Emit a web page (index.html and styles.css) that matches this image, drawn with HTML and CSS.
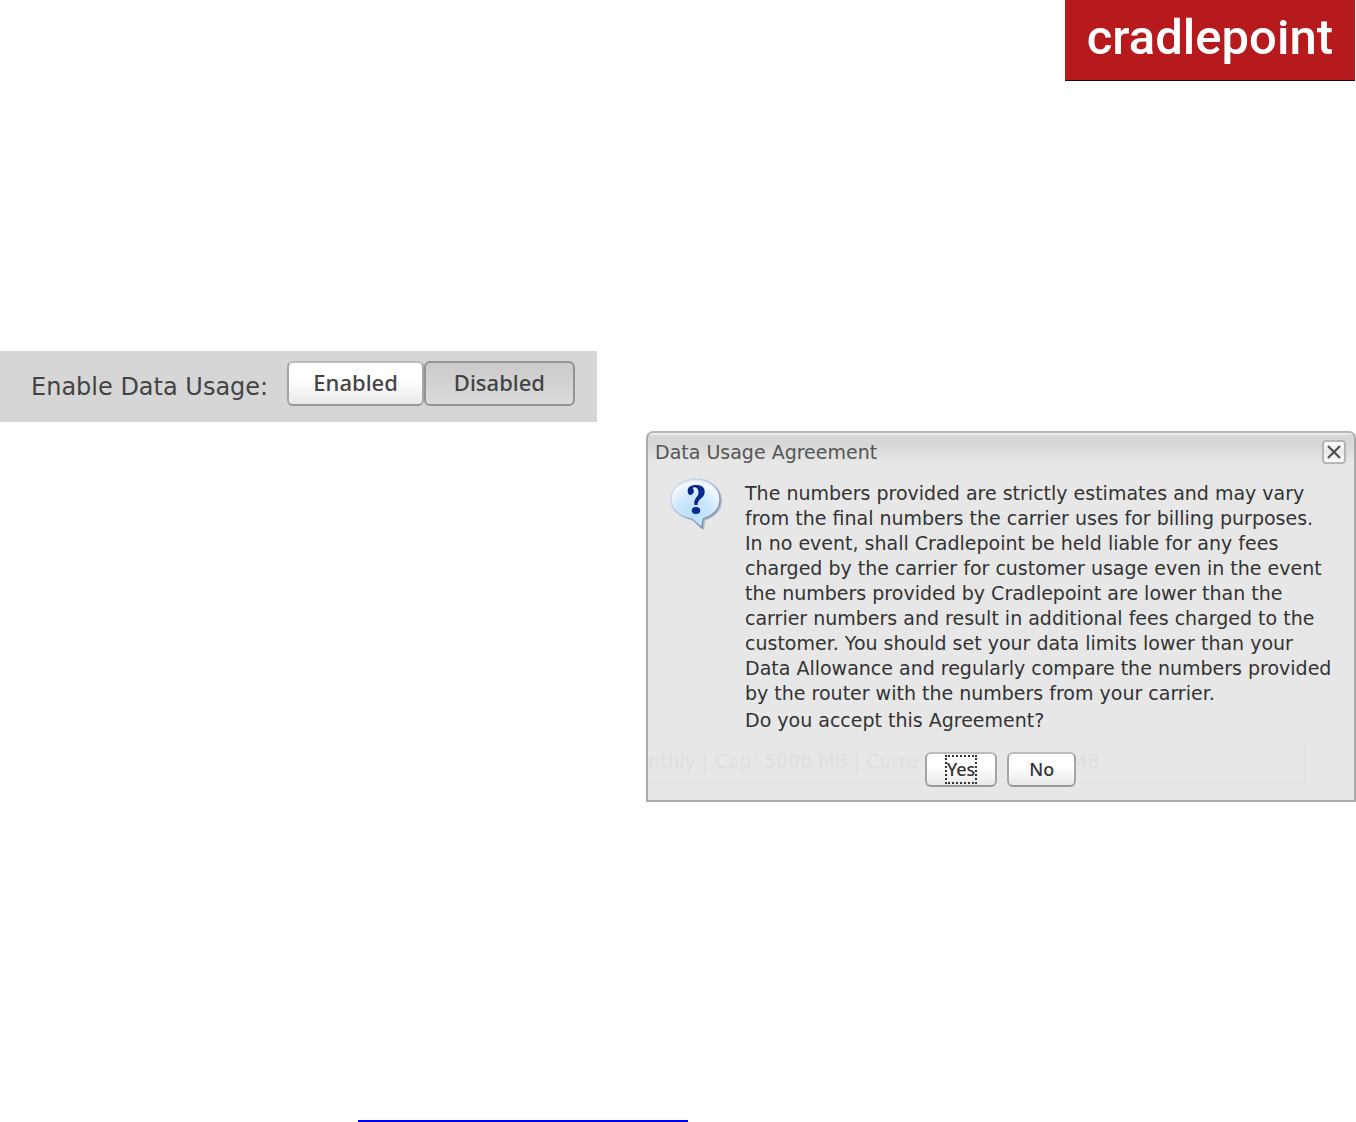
FILE: index.html
```html
<!DOCTYPE html>
<html lang="en">
<head>
<meta charset="utf-8">
<meta name="viewport" content="width=device-width, initial-scale=1">
<title>Data Usage Agreement</title>
<link rel="stylesheet" href="styles.css">
</head>
<body>
<header class="page-header">
  <div class="logo">cradlepoint</div>
</header>
<main class="content">
  <section class="usage" aria-labelledby="usage-label">
    <span class="usage-label" id="usage-label">Enable Data Usage:</span>
    <div class="toggle" role="group" aria-labelledby="usage-label">
      <button class="button toggle-button" type="button" aria-pressed="false">Enabled</button>
      <button class="button toggle-button toggle-disabled" type="button" aria-pressed="true">Disabled</button>
    </div>
  </section>
  <section class="dialog" role="dialog" aria-labelledby="dialog-title">
    <div class="backdrop-text" aria-hidden="true"><span>nthly | Cap: 5000 MB | Curre</span><span>MB</span></div>
    <div class="dialog-header">
      <h1 class="dialog-title" id="dialog-title">Data Usage Agreement</h1>
      <button class="close" type="button" aria-label="Close">
        <svg width="14" height="14" viewBox="0 0 14 14"><path d="M1 1L13 13M13 1L1 13" stroke="#505050" stroke-width="2.2"/></svg>
      </button>
    </div>
    <div class="dialog-body">
      <svg class="question" width="54" height="54" viewBox="0 0 54 54" aria-hidden="true">
        <defs>
          <radialGradient id="bubble" cx="48%" cy="72%" r="75%">
            <stop offset="0" stop-color="#b8e0ff"/>
            <stop offset=".5" stop-color="#cfe7fc"/>
            <stop offset=".85" stop-color="#f5faff"/>
            <stop offset="1" stop-color="#cddbed"/>
          </radialGradient>
          <linearGradient id="rim" x2="1" y2="1">
            <stop offset="0" stop-color="#dce7f4"/>
            <stop offset=".5" stop-color="#a9bdd9"/>
            <stop offset="1" stop-color="#5b7193"/>
          </linearGradient>
        </defs>
        <path d="M28 3C42 3 52 11 52 23C52 33 44 39 35 43L34 52L25 43C12 41 3 34 3 23C3 11 13 3 28 3Z" fill="#909cad" opacity=".6"/>
        <path d="M26 1C40 1 50 10 50 21C50 32 43 38 33 41L32 50L22 41C10 39 1 32 1 21C1 10 12 1 26 1Z" fill="url(#bubble)" stroke="url(#rim)" stroke-width="1.500"/>
        <path d="M18 15C16 8 23 6.500 27 7C34 7.500 36 12 34 17C32 21 28 21 27.500 27H24.500C23 20 29 19 28.500 14C28 9 24 8.500 22.500 10C25.500 13 23 17 20.500 17C19 17 18.300 16 18 15Z" fill="#08298b"/>
        <ellipse cx="26" cy="32.500" rx="4.200" ry="3.500" fill="#08298b"/>
      </svg>
      <div class="message">
        <p>The numbers provided are strictly estimates and may vary<br>from the final numbers the carrier uses for billing purposes.<br>In no event, shall Cradlepoint be held liable for any fees<br>charged by the carrier for customer usage even in the event<br>the numbers provided by Cradlepoint are lower than the<br>carrier numbers and result in additional fees charged to the<br>customer. You should set your data limits lower than your<br>Data Allowance and regularly compare the numbers provided<br>by the router with the numbers from your carrier.</p>
        <p>Do you accept this Agreement?</p>
      </div>
    </div>
    <div class="dialog-actions">
      <button class="button" type="button"><span class="focus-ring">Yes</span></button>
      <button class="button" type="button">No</button>
    </div>
  </section>
</main>
<footer class="page-footer"><a class="footer-link" href="#usage-label" aria-label="Data usage"></a></footer>
</body>
</html>
```
FILE: styles.css
```css
* {
  box-sizing: border-box;
}

body {
  margin: 0;
  background: #fff;
  color: #333;
  font: 19px/25px "DejaVu Sans", sans-serif;
}

.page-header {
  display: flex;
  justify-content: flex-end;
  padding-right: 1px;
}

.logo {
  padding: 10px 22px 14px;
  border-bottom: 1px solid #200;
  background: #b71a1c;
  color: #fff;
  font: 500 49px/56px Roboto, sans-serif;
}

.content {
  display: grid;
  grid-template-columns: 597fr 710fr;
  gap: 9px 49px;
  align-items: start;
  margin-top: 270px;
}

.usage {
  display: flex;
  align-items: center;
  gap: 16px;
  padding: 10px 22px 16px 31px;
  background: #d6d6d6;
}

.usage-label {
  flex: 1;
  padding-top: 8px;
  color: #444;
  font-size: 24px;
  white-space: nowrap;
}

.toggle {
  display: flex;
}

.button {
  height: 35px;
  padding: 0 20px;
  border: 2px solid #a5a5a5;
  border-top-color: #bbb;
  border-bottom-color: #989898;
  border-radius: 6px;
  background: linear-gradient(#fff 40%, #e9e9e9);
  color: #333;
  font: 500 18px/25px "Noto Sans", sans-serif;
}

.toggle-button {
  height: 45px;
  padding: 0 24px 2px;
  color: #444;
  font-size: 22px;
}

.toggle-disabled {
  padding: 0 28px 2px;
  border-color: #8f9496;
  background: linear-gradient(#cbcbcb, #dadada);
}

.dialog {
  position: relative;
  grid-column: 2;
  grid-row: 2;
  padding: 7px 8px 13px 7px;
  border: 2px solid #aaa;
  border-top-color: #b4b7b7;
  border-radius: 7px 7px 0 0;
  background: linear-gradient(#f4f4f4 0, #d7d7d7 3px, #d7d7d7 12px, #e7e7e7 30px);
}

.dialog-header {
  display: flex;
  justify-content: space-between;
  align-items: flex-start;
}

.dialog-title {
  margin: 0;
  color: #555;
  font: inherit;
}

.close {
  display: grid;
  place-items: center;
  width: 24px;
  height: 24px;
  padding: 0;
  border: 2px solid #b5b5b5;
  border-radius: 4px;
  background: linear-gradient(#fff, #e8e8e8 50%, #fff);
}

.dialog-body {
  display: flex;
  gap: 21px;
  padding: 13px 0 0 15px;
}

.question {
  flex: none;
}

.message {
  padding-top: 3px;
  white-space: nowrap;
}

.message p {
  margin: 0;
}

.message p + p {
  margin-top: 2px;
}

.dialog-actions {
  position: relative;
  display: flex;
  justify-content: center;
  gap: 10px;
  margin-top: 19px;
}

.focus-ring {
  display: inline-block;
  outline: 2px dotted #333;
}

.backdrop-text {
  position: absolute;
  right: 48px;
  bottom: 16px;
  left: 0;
  display: flex;
  justify-content: space-between;
  height: 40px;
  padding-right: 204px;
  border: 2px solid #e4e4e4;
  border-width: 0 2px 2px 0;
  color: #dfdfdf;
  line-height: 34px;
  white-space: nowrap;
}

.page-footer {
  display: flex;
  padding: 318px 0 0 358px;
}

.footer-link {
  width: 330px;
  border-top: 2px solid #00f;
}
```
